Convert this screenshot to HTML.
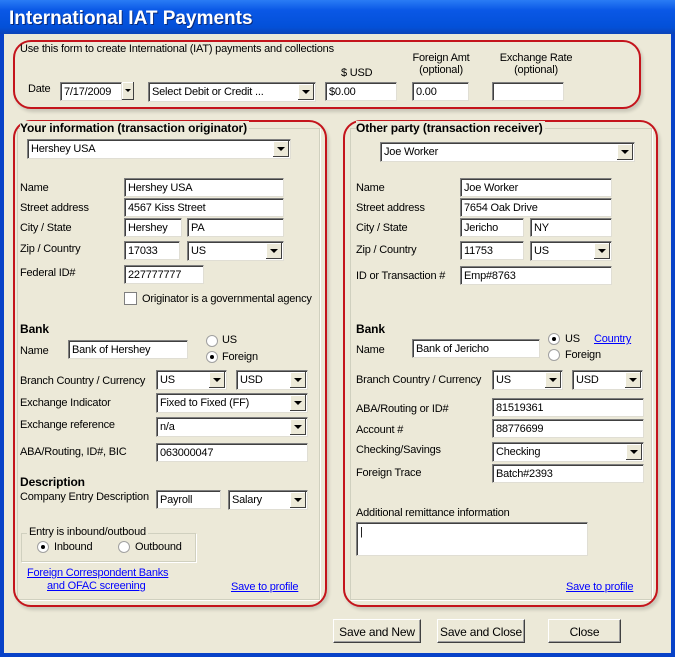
<!DOCTYPE html><html><head><style>
*{box-sizing:border-box}
body{margin:0;width:675px;height:657px;overflow:hidden;font-family:"Liberation Sans",sans-serif;font-size:11px;letter-spacing:-0.2px;color:#000}
#win{position:absolute;left:0;top:0;width:675px;height:657px;background:#0842c8;}
#title{position:absolute;left:0;top:0;width:675px;height:34px;background:linear-gradient(#2a7cf5,#0a58e6 30%,#0350d8 80%,#0c44b8);color:#fff;font-weight:bold;font-size:19px;letter-spacing:0;padding:8px 0 0 9px;text-shadow:1px 1px #0a2a7a}
#body{position:absolute;left:4px;top:34px;width:667px;height:619px;background:#ece9d8}
.a{position:absolute;white-space:nowrap}
.i{position:absolute;background:#fff;border:1px solid #7f7f7f;border-right-color:#e0ded4;border-bottom-color:#e0ded4;box-shadow:inset 1px 1px #404040;height:19px;padding:3px 0 0 3px;white-space:nowrap}
.c{position:absolute;background:#fff;border:1px solid #7f7f7f;border-right-color:#e0ded4;border-bottom-color:#e0ded4;box-shadow:inset 1px 1px #404040;height:20px;padding:3px 0 0 3px;white-space:nowrap}
.c:after{content:"";position:absolute;right:1px;top:1px;width:16px;height:16px;background:#ece9d8;box-shadow:inset -1px -1px #404040,inset 1px 1px #fff}
.c:before{content:"";position:absolute;right:5px;top:7px;border-left:4px solid transparent;border-right:4px solid transparent;border-top:4px solid #000;z-index:2}
.ov{position:absolute;border:2px solid #c4141c;border-radius:18px;box-shadow:2px 3px 3px rgba(0,0,0,0.15)}
.gb{position:absolute;border:1px solid #d0d0bf;box-shadow:1px 1px #fff}
.b{font-weight:bold;font-size:12px;letter-spacing:-0.1px}
.l{color:#0000ff;text-decoration:underline}
.r{position:absolute;width:12px;height:12px;border-radius:50%;background:#fff;border:1px solid #a0a0a0}
.r.on:after{content:"";position:absolute;left:3px;top:3px;width:4px;height:4px;border-radius:50%;background:#000}
.btn{position:absolute;height:24px;background:#ece9d8;border:1px solid #fff;border-right-color:#404040;border-bottom-color:#404040;box-shadow:inset -1px -1px #a0a0a0;text-align:center;padding-top:5px;font-size:12px}
</style></head><body><div id="win"><div id="title">International IAT Payments</div>
<div id="body"></div></div>
<div class="ov" style="left:13px;top:40px;width:628px;height:69px"></div>
<div class="a" style="left:20px;top:43px">Use this form to create International (IAT) payments and collections</div>
<div class="a" style="left:28px;top:83px">Date</div>
<div class="i" style="left:60px;top:82px;width:62px">7/17/2009</div>
<div class="a" style="left:122px;top:82px;width:12px;height:18px;background:#ece9d8;box-shadow:inset -1px -1px #404040,inset 1px 1px #fff"></div>
<div class="a" style="left:125px;top:89px;border-left:3px solid transparent;border-right:3px solid transparent;border-top:3px solid #000"></div>
<div class="c" style="left:148px;top:82px;width:168px">Select Debit or Credit ...</div>
<div class="a" style="left:341px;top:67px">$ USD</div>
<div class="i" style="left:325px;top:82px;width:72px">$0.00</div>
<div class="a" style="left:412px;top:52px;width:58px;text-align:center;line-height:12px">Foreign Amt<br>(optional)</div>
<div class="i" style="left:412px;top:82px;width:57px">0.00</div>
<div class="a" style="left:492px;top:52px;width:88px;text-align:center;line-height:12px">Exchange Rate<br>(optional)</div>
<div class="i" style="left:492px;top:82px;width:72px"></div>

<div class="gb" style="left:17px;top:128px;width:303px;height:472px"></div>
<div class="gb" style="left:350px;top:128px;width:302px;height:472px"></div>
<div class="ov" style="left:13px;top:120px;width:314px;height:487px"></div>
<div class="ov" style="left:343px;top:120px;width:315px;height:487px"></div>

<div class="a b" style="left:20px;top:121px;background:#ece9d8;padding-right:2px">Your information (transaction originator)</div>
<div class="c" style="left:27px;top:139px;width:264px">Hershey USA</div>
<div class="a" style="left:20px;top:182px">Name</div><div class="i" style="left:124px;top:178px;width:160px">Hershey USA</div>
<div class="a" style="left:20px;top:202px">Street address</div><div class="i" style="left:124px;top:198px;width:160px">4567 Kiss Street</div>
<div class="a" style="left:20px;top:222px">City / State</div><div class="i" style="left:124px;top:218px;width:58px">Hershey</div><div class="i" style="left:187px;top:218px;width:97px">PA</div>
<div class="a" style="left:20px;top:243px">Zip / Country</div><div class="i" style="left:124px;top:241px;width:56px">17033</div><div class="c" style="left:187px;top:241px;width:97px">US</div>
<div class="a" style="left:20px;top:267px">Federal ID#</div><div class="i" style="left:124px;top:265px;width:80px">227777777</div>
<div class="a" style="left:124px;top:292px;width:13px;height:13px;background:#fff;border:1px solid #7f7f7f"></div>
<div class="a" style="left:142px;top:293px">Originator is a governmental agency</div>
<div class="a b" style="left:20px;top:322px">Bank</div>
<div class="a" style="left:20px;top:345px">Name</div><div class="i" style="left:68px;top:340px;width:120px">Bank of Hershey</div>
<div class="r" style="left:206px;top:335px"></div><div class="a" style="left:222px;top:334px">US</div>
<div class="r on" style="left:206px;top:351px"></div><div class="a" style="left:222px;top:351px">Foreign</div>
<div class="a" style="left:20px;top:375px">Branch Country / Currency</div><div class="c" style="left:156px;top:370px;width:71px">US</div><div class="c" style="left:236px;top:370px;width:72px">USD</div>
<div class="a" style="left:20px;top:397px">Exchange Indicator</div><div class="c" style="left:156px;top:393px;width:152px">Fixed to Fixed (FF)</div>
<div class="a" style="left:20px;top:419px">Exchange reference</div><div class="c" style="left:156px;top:417px;width:152px">n/a</div>
<div class="a" style="left:20px;top:446px">ABA/Routing, ID#, BIC</div><div class="i" style="left:156px;top:443px;width:152px">063000047</div>
<div class="a b" style="left:20px;top:475px">Description</div>
<div class="a" style="left:20px;top:491px">Company Entry Description</div><div class="i" style="left:156px;top:490px;width:65px">Payroll</div><div class="c" style="left:228px;top:490px;width:80px">Salary</div>
<div class="gb" style="left:21px;top:533px;width:175px;height:29px"></div>
<div class="a" style="left:27px;top:526px;background:#ece9d8;padding:0 2px">Entry is inbound/outboud</div>
<div class="r on" style="left:37px;top:541px"></div><div class="a" style="left:54px;top:541px">Inbound</div>
<div class="r" style="left:118px;top:541px"></div><div class="a" style="left:135px;top:541px">Outbound</div>
<div class="a l" style="left:27px;top:567px">Foreign Correspondent Banks</div>
<div class="a l" style="left:47px;top:580px">and OFAC screening</div>
<div class="a l" style="left:231px;top:581px">Save to profile</div>

<div class="a b" style="left:356px;top:121px;background:#ece9d8;padding-right:2px">Other party (transaction receiver)</div>
<div class="c" style="left:380px;top:142px;width:255px">Joe Worker</div>
<div class="a" style="left:356px;top:182px">Name</div><div class="i" style="left:460px;top:178px;width:152px">Joe Worker</div>
<div class="a" style="left:356px;top:202px">Street address</div><div class="i" style="left:460px;top:198px;width:152px">7654 Oak Drive</div>
<div class="a" style="left:356px;top:222px">City / State</div><div class="i" style="left:460px;top:218px;width:64px">Jericho</div><div class="i" style="left:530px;top:218px;width:82px">NY</div>
<div class="a" style="left:356px;top:244px">Zip / Country</div><div class="i" style="left:460px;top:241px;width:64px">11753</div><div class="c" style="left:530px;top:241px;width:82px">US</div>
<div class="a" style="left:356px;top:270px">ID or Transaction #</div><div class="i" style="left:460px;top:266px;width:152px">Emp#8763</div>
<div class="a b" style="left:356px;top:322px">Bank</div>
<div class="a" style="left:356px;top:344px">Name</div><div class="i" style="left:412px;top:339px;width:128px">Bank of Jericho</div>
<div class="r on" style="left:548px;top:333px"></div><div class="a" style="left:565px;top:333px">US</div><div class="a l" style="left:594px;top:333px">Country</div>
<div class="r" style="left:548px;top:349px"></div><div class="a" style="left:565px;top:349px">Foreign</div>
<div class="a" style="left:356px;top:374px">Branch Country / Currency</div><div class="c" style="left:492px;top:370px;width:71px">US</div><div class="c" style="left:572px;top:370px;width:71px">USD</div>
<div class="a" style="left:356px;top:403px">ABA/Routing or ID#</div><div class="i" style="left:492px;top:398px;width:152px">81519361</div>
<div class="a" style="left:356px;top:424px">Account #</div><div class="i" style="left:492px;top:419px;width:152px">88776699</div>
<div class="a" style="left:356px;top:444px">Checking/Savings</div><div class="c" style="left:492px;top:442px;width:152px">Checking</div>
<div class="a" style="left:356px;top:467px">Foreign Trace</div><div class="i" style="left:492px;top:464px;width:152px">Batch#2393</div>
<div class="a" style="left:356px;top:507px">Additional remittance information</div>
<div class="i" style="left:356px;top:522px;width:232px;height:34px">|</div>
<div class="a l" style="left:566px;top:581px">Save to profile</div>

<div class="btn" style="left:333px;top:619px;width:88px">Save and New</div>
<div class="btn" style="left:437px;top:619px;width:88px">Save and Close</div>
<div class="btn" style="left:548px;top:619px;width:73px">Close</div>
</body></html>
